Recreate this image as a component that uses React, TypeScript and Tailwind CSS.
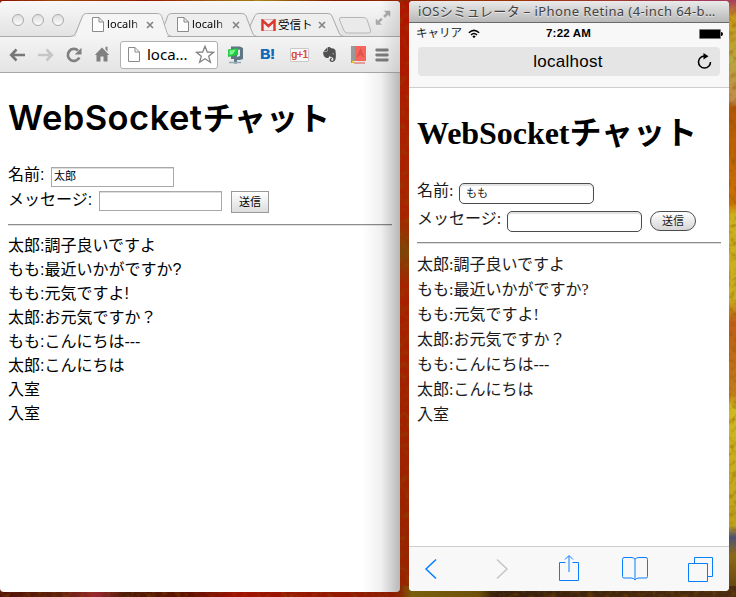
import React from 'react';
import { SiEvernote } from 'react-icons/si';

const sans = "font-['Liberation_Sans','Noto_Sans_CJK_JP',sans-serif]";
const serif = "font-['Liberation_Serif','Noto_Sans_CJK_JP',sans-serif]";
const ui = "font-['Noto_Sans','Noto_Sans_CJK_JP',sans-serif]";

function Wallpaper() {
  return (
    <svg className="absolute inset-0" width="736" height="597" viewBox="0 0 736 597" aria-hidden="true">
      <defs>
        <linearGradient id="wTop">
          <stop offset="0" stopColor="#8f0c00" />
          <stop offset=".08" stopColor="#a04a08" />
          <stop offset=".2" stopColor="#9a1400" />
          <stop offset=".35" stopColor="#a88a18" />
          <stop offset=".45" stopColor="#8a1a00" />
          <stop offset=".7" stopColor="#a03008" />
          <stop offset="1" stopColor="#a83a70" />
        </linearGradient>
        <linearGradient id="wMid" x1="0" y1="0" x2="0" y2="1">
          <stop offset="0" stopColor="#b01400" />
          <stop offset=".36" stopColor="#a82400" />
          <stop offset=".42" stopColor="#7e4408" />
          <stop offset=".48" stopColor="#a82000" />
          <stop offset="1" stopColor="#962400" />
        </linearGradient>
        <linearGradient id="wRight" x1="0" y1="0" x2="0" y2="1">
          <stop offset="0" stopColor="#a83c60" />
          <stop offset=".03" stopColor="#c79a18" />
          <stop offset=".1" stopColor="#b9a73c" />
          <stop offset=".17" stopColor="#c08a48" />
          <stop offset=".18" stopColor="#b35500" />
          <stop offset=".34" stopColor="#cd7004" />
          <stop offset=".36" stopColor="#cbb21c" />
          <stop offset=".5" stopColor="#c9ae20" />
          <stop offset=".54" stopColor="#c05c12" />
          <stop offset=".66" stopColor="#c27c18" />
          <stop offset=".68" stopColor="#cfba20" />
          <stop offset=".88" stopColor="#bda11c" />
          <stop offset=".9" stopColor="#4b5175" />
          <stop offset=".93" stopColor="#8a6b18" />
          <stop offset="1" stopColor="#5b3a10" />
        </linearGradient>
        <linearGradient id="wBottom">
          <stop offset="0" stopColor="#501008" />
          <stop offset=".08" stopColor="#5c200c" />
          <stop offset=".13" stopColor="#9a2430" />
          <stop offset=".17" stopColor="#4c1c08" />
          <stop offset=".26" stopColor="#611000" />
          <stop offset=".32" stopColor="#a01000" />
          <stop offset=".54" stopColor="#8c1c00" />
          <stop offset=".56" stopColor="#78600e" />
          <stop offset=".65" stopColor="#6c500c" />
          <stop offset=".67" stopColor="#38200c" />
          <stop offset="1" stopColor="#4c2c10" />
        </linearGradient>
        <filter id="paint" x="0" y="0" width="100%" height="100%">
          <feTurbulence type="fractalNoise" baseFrequency=".16" numOctaves="3" seed="4" />
          <feColorMatrix values="0 0 0 0 .25  0 0 0 0 .08  0 0 0 0 0  1.2 0 0 0 -.55" />
        </filter>
      </defs>
      <rect width="736" height="597" fill="url(#wTop)" />
      <rect x="396" y="2" width="18" height="595" fill="url(#wMid)" />
      <rect x="724" width="12" height="597" fill="url(#wRight)" />
      <rect y="586" width="736" height="11" fill="url(#wBottom)" />
      <rect width="736" height="597" filter="url(#paint)" />
    </svg>
  );
}

function TabShapes() {
  return (
    <svg className="absolute inset-0" width="400" height="36" viewBox="0 1 400 36" fill="none" stroke="#a9a9a9" aria-hidden="true">
      <path d="M250 26 L255 15.5 Q256 13.5 258.500 13.500 H328 Q331 13.500 332 16 L339 33 Q340.500 36.500 344 36.500 H250Z" fill="#eee" />
      <path d="M164 26 L168 15.500 Q169 13.500 171.500 13.500 H242 Q245 13.500 246 16 L252.500 33 Q254 36.500 257 36.500 H164Z" fill="#eee" />
      <path d="M0 36.500 H70 Q74 36.500 75.500 33.500 L82.500 16 Q83.500 13.500 86.500 13.500 H157 Q160.500 13.500 161.500 16 L167 33 Q168.500 36.500 172 36.500 H400" />
      <path d="M76 37.500 L76.500 33.500 L83.500 16 Q84.500 14 87 14 H157 Q160 14 161 16 L166.500 33 L167.500 37.500Z" fill="#f5f5f5" stroke="none" />
      <path d="M341 17.500 H363 Q366 17.500 367 19.500 L370.500 30 Q371.500 33 368.500 33 H347.500 Q345 33 344 30.500 L339.500 20 Q339 17.500 341 17.500Z" fill="#eaeaea" stroke="#b6b6b6" />
    </svg>
  );
}

function DocIcon() {
  return (
    <svg className="shrink-0" width="12" height="15" viewBox="0 0 12 15" fill="#fdfdfd" stroke="#8b8b8b" aria-hidden="true">
      <path d="M.5 .5 H7 L11.500 5 V14.500 H.5Z M7 .5 V5 H11.500" />
    </svg>
  );
}

function CloseIcon() {
  return (
    <svg className="shrink-0" width="8" height="8" viewBox="0 0 8 8" stroke="#828282" strokeWidth="1.600" aria-hidden="true">
      <path d="M1 1 L7 7 M7 1 L1 7" />
    </svg>
  );
}

function TrafficLight() {
  return <span className="h-3 w-3 rounded-full border border-[#aaa] bg-gradient-to-b from-[#dedede] to-[#fbfbfb]" />;
}

function TabTitle({ children }: { children: string }) {
  return <span className="ml-[3px] w-[34px] whitespace-nowrap bg-gradient-to-r from-black from-75% to-black/20 bg-clip-text text-[11px] tracking-[0.100px] text-transparent">{children}</span>;
}

function TabStrip() {
  return (
    <div className="relative h-[36px] bg-gradient-to-b from-[#f8f8f8] to-[#e2e2e2]">
      <TabShapes />
      <div className={`relative flex h-full items-center pt-[11px] pl-3 text-[11.500px] text-black ${ui}`}>
        <div className="-mt-[10px] flex w-[80px] gap-2">
          <TrafficLight />
          <TrafficLight />
          <TrafficLight />
        </div>
        <DocIcon />
        <TabTitle>localh</TabTitle>
        <span className="ml-[5px] flex w-[31px]"><CloseIcon /></span>
        <DocIcon />
        <TabTitle>localh</TabTitle>
        <span className="ml-[6px] flex w-[29px]"><CloseIcon /></span>
        <svg width="15" height="12" viewBox="0 0 15 12" aria-hidden="true">
          <path d="M1 .5 H14 V11.500 H1Z" fill="#f4eeee" stroke="#d9b6b2" />
          <path d="M1.500 12 V1.500 L7.500 7 L13.500 1.500 V12" fill="none" stroke="#d93a2f" strokeWidth="2.400" />
        </svg>
        <span className="ml-[2px] w-[36px] whitespace-nowrap">受信ト</span>
        <span className="ml-[4px] flex"><CloseIcon /></span>
      </div>
      <svg className="absolute top-[9px] left-[375px]" width="16" height="16" viewBox="0 0 16 16" fill="#aaa" stroke="#aaa" aria-hidden="true">
        <path d="M9.500 1 H15 V6.500 L13 4.600 L10 7.500 L8.500 6 L11.400 3Z M6.500 14.500 H1 V9 L3 10.900 L6 8 L7.500 9.500 L4.600 12.400Z" strokeWidth=".5" />
      </svg>
    </div>
  );
}

function Toolbar() {
  return (
    <div className="flex h-[36px] items-center border-b border-[#a6a6a6] bg-gradient-to-b from-[#f4f4f4] to-[#e4e4e4] pl-[9px]">
      <svg width="17" height="16" viewBox="0 0 17 16" fill="none" stroke="#777" strokeWidth="2.600" aria-hidden="true"><path d="M7.500 2.500 L2.200 8 L7.500 13.500 M2.500 8 H16" /></svg>
      <svg className="ml-[12px]" width="16" height="16" viewBox="0 0 16 16" fill="none" stroke="#c6c6c6" strokeWidth="2.600" aria-hidden="true"><path d="M8.500 2.500 L13.800 8 L8.500 13.500 M13.500 8 H0" /></svg>
      <svg className="ml-[12px]" width="16" height="16" viewBox="0 0 16 16" fill="none" aria-hidden="true">
        <path d="M13.300 10.500 A6 6 0 1 1 12 3.600" stroke="#808080" strokeWidth="2.700" /><path d="M15.500 .7 V7.500 H8.700Z" fill="#808080" />
      </svg>
      <svg className="ml-[12px]" width="16" height="17" viewBox="0 0 16 17" fill="#808080" aria-hidden="true"><path d="M8 1.500 L15.200 9 H13.500 V15.500 H9.500 V10.500 H6.500 V15.500 H2.500 V9 H.8Z M11.500 .8 H13.500 V5.500 L11.500 3.500Z" /></svg>
      <div className={`ml-[10px] flex h-[28px] w-[98px] items-center rounded-[3px] border border-[#b0b0b0] bg-white pl-[7px] text-[15px] text-black ${ui}`}>
        <DocIcon />
        <span className="ml-[7px] w-[42px]">loca...</span>
        <svg className="ml-[6px]" width="20" height="19" viewBox="0 0 20 19" fill="#fff" stroke="#858585" strokeWidth="1.300" aria-hidden="true"><path d="M10 1.200 L12.300 7 L18.500 7.300 L13.700 11.200 L15.400 17.300 L10 13.800 L4.600 17.300 L6.300 11.200 L1.500 7.300 L7.700 7Z" /></svg>
      </div>
      <svg className="ml-[9px]" width="18" height="20" viewBox="0 0 18 20" aria-hidden="true">
        <path d="M4 1.500 H13 L16 3 V14 L13 15 H10 V18.500 H7 V14 H4Z" fill="#5f7685" />
        <path d="M10 5 L13 4.500 V11 L10 12Z" fill="#dce8ec" />
        <path d="M1 4.500 L11 3 V10 L1 12Z" fill="#20c840" />
        <path d="M2.500 5.500 L9 4.500 L6 9 L2.500 10Z" fill="#7df590" />
        <path d="M2 17.500 H14" stroke="#91a8b5" strokeWidth="1.500" />
      </svg>
      <span className="ml-[15px] w-[16px] font-['Liberation_Sans',sans-serif] text-[14px] font-bold text-[#1269b8] [text-shadow:0.400px_0_#1269b8]">B!</span>
      <span className="ml-[14px] flex h-[14px] w-[19px] items-center justify-center rounded-[1px] border border-[#c9c9c9] bg-[#fbfbfb] font-['Liberation_Sans',sans-serif] text-[10.500px] leading-none tracking-[-0.400px] text-[#dc4835] [text-shadow:0.400px_0_#dc4835]">g+1</span>
      <SiEvernote className="ml-[13px] h-[15px] w-[15px] text-[#505050]" />
      <svg className="ml-[14px]" width="16" height="19" viewBox="0 0 16 19" aria-hidden="true">
        <path d="M0 1 H5 V18 H0Z" fill="#999" /><path d="M4 1 H15 V16 H4Z" fill="#f8655c" /><path d="M1 16 H14 V18 H1Z" fill="#eee3de" /><path d="M3 18 H14" stroke="#d65852" /><path d="M1 15 L4 18 H1Z" fill="#ecc41b" />
        <path d="M6.500 12 L9.500 5 L12.500 12 M8 9.500 H11" fill="none" stroke="#db504d" strokeWidth="1.500" />
      </svg>
      <svg className="ml-[8px]" width="14" height="14" viewBox="0 0 14 14" stroke="#7b7b7b" strokeWidth="2.800" strokeLinecap="round" aria-hidden="true"><path d="M1.700 2 H12.300 M1.700 7 H12.300 M1.700 12 H12.300" /></svg>
    </div>
  );
}

const chromeLog = ['太郎:調子良いですよ', 'もも:最近いかがですか?', 'もも:元気ですよ!', '太郎:お元気ですか？', 'もも:こんにちは---', '太郎:こんにちは', '入室', '入室'];
const phoneLog = chromeLog.slice(0, 7);

function ChromeWindow() {
  return (
    <section className="relative mt-px h-[591px] w-[400px] overflow-hidden rounded-[4px] bg-white">
      <TabStrip />
      <Toolbar />
      <main className={`px-2 text-[16px] leading-6 text-black ${sans}`}>
        <h1 className="mt-[18px] h-[50px] whitespace-nowrap text-[32px] leading-[50px] font-bold"><span className="font-['Inter',sans-serif] text-[34.500px] font-semibold tracking-[0.450px]">WebSocket</span><span className="font-['Noto_Sans_CJK_JP',sans-serif]">チャット</span></h1>
        <div className="mt-[22px] flex h-[24px] items-start whitespace-nowrap">
          <span className="w-[43px]">名前:</span>
          <span className="mt-[4px] h-[20px] w-[123px] border border-[#a9a9a9] bg-white pl-[2px] text-[11px] leading-[17px] shadow-[inset_0_1px_#ddd]">太郎</span>
        </div>
        <div className="mt-[1px] flex h-[25px] items-start whitespace-nowrap">
          <span className="w-[91px]">メッセージ:</span>
          <span className="mt-[3px] h-[20px] w-[123px] border border-[#a9a9a9] bg-white shadow-[inset_0_1px_#ddd]" />
          <span className="mt-[3px] ml-[9px] flex h-[22px] w-[38px] items-center justify-center border border-[#999] bg-gradient-to-b from-white to-[#ddd] pb-px text-[11px]">送信</span>
        </div>
        <div className="mt-[11px] h-[2px] border-t border-b border-t-[#8c8c8c] border-b-[#e3e3e3]" />
        <div className="mt-[8px]">
          {chromeLog.map((line, i) => <p key={i} className="h-6 whitespace-nowrap">{line}</p>)}
        </div>
      </main>
      <div className="absolute top-0 right-0 h-[72px] w-[20px] bg-gradient-to-r from-transparent to-black/10" />
      <div className="absolute top-[72px] right-0 bottom-0 w-[38px] bg-gradient-to-r from-transparent via-black/6 to-black/28" />
    </section>
  );
}

function SafariToolbar() {
  return (
    <footer className="flex h-[45px] items-center border-t border-[#cfcfcf] bg-[#f8f8f8] pl-[15px] text-[#087eff]">
      <svg width="14" height="22" viewBox="0 0 14 22" fill="none" stroke="currentColor" strokeWidth="1.500" aria-hidden="true"><path d="M12 1.500 L2 11 L12 20.500" /></svg>
      <svg className="ml-[57px]" width="14" height="22" viewBox="0 0 14 22" fill="none" stroke="#c5c5c8" strokeWidth="1.500" aria-hidden="true"><path d="M2 1.500 L12 11 L2 20.500" /></svg>
      <svg className="-mt-[3px] ml-[50px]" width="20" height="28" viewBox="0 0 20 28" fill="none" stroke="currentColor" aria-hidden="true"><path d="M6.500 8.500 H.5 V26.500 H19.500 V8.500 H13.500 M10 18 V2 M6 5.500 L10 1.500 L14 5.500" /></svg>
      <svg className="ml-[42px]" width="28" height="26" viewBox="0 0 28 26" fill="none" stroke="currentColor" aria-hidden="true"><path d="M14 3 Q12.500 1.500 10 1.500 H3 Q1.500 1.500 1.500 3.500 V20.500 Q1.500 22 3 22 H10 Q13 22 14 24 Q15 22 18 22 H25 Q26.500 22 26.500 20.500 V3.500 Q26.500 1.500 25 1.500 H18 Q15.500 1.500 14 3 V24" /></svg>
      <svg className="-mt-[1px] ml-[39px]" width="26" height="26" viewBox="0 0 26 26" fill="none" stroke="currentColor" aria-hidden="true"><path d="M.5 7.500 H19.500 V25.500 H.5Z M6.500 7 V1.500 H24.500 V20.500 H20" /></svg>
    </footer>
  );
}

function SimulatorWindow() {
  return (
    <section className="mt-px ml-[9px] flex h-[590px] w-[320px] flex-col overflow-hidden rounded-[4px] bg-white text-black">
      <header className={`flex h-[22px] items-center border-b border-[#696969] bg-gradient-to-b from-[#eaeaea] to-[#b8b8b8] pt-px pl-[9px] text-[13px] tracking-[0.410px] whitespace-nowrap text-[#424242] [text-shadow:0_1px_#e8e8e8] ${ui}`}>iOSシミュレータ – iPhone Retina (4-inch 64-b…</header>
      <div className="h-[65px] border-b border-[#cdcdcd] bg-[#f8f8f8]">
        <div className={`flex h-[20px] items-center pt-px pl-[7px] text-[11.500px] ${sans}`}>
          <span className="w-[52px] text-[#222]">キャリア</span>
          <svg width="12" height="10" viewBox="0 0 14 11" fill="none" stroke="#000" strokeWidth="1.800" aria-hidden="true"><path d="M1 4 Q7 -1.500 13 4 M3.500 6.500 Q7 3.300 10.500 6.500" /><path d="M5 8 Q7 6.300 9 8 L7 10.500Z" fill="#000" stroke="none" /></svg>
          <span className="ml-[66px] w-[60px] text-[11.500px] font-bold tracking-[0.200px]">7:22 AM</span>
          <span className="ml-[93px] h-[10px] w-[22px] rounded-[1px] border border-[#777] bg-black" />
          <span className="h-[4px] w-[2px] rounded-r bg-black" />
        </div>
        <div className={`relative mt-[4px] ml-[9px] flex h-[29px] w-[302px] items-center justify-center rounded-[4px] bg-[#e5e5e6] pr-[2px] text-[17px] tracking-[0.250px] ${sans}`}>
          localhost
          <svg className="absolute top-[6px] right-[7px]" width="17" height="17" viewBox="0 0 17 17" fill="none" stroke="#000" strokeWidth="1.600" aria-hidden="true"><path d="M8.500 3 A6 6 0 1 0 14.500 9" /><path d="M7.500 0 L12.500 3.200 L7.500 6.500Z" fill="#000" stroke="none" /></svg>
        </div>
      </div>
      <main className={`flex-1 pr-2 pl-2 text-[16px] leading-[25px] ${serif}`}>
        <h1 className="mt-[20px] h-[50px] whitespace-nowrap text-[32px] leading-[50px] font-bold tracking-[-0.050px]">WebSocketチャット</h1>
        <div className="mt-[20px] flex h-[28px] items-start whitespace-nowrap text-[#1a1a1a]">
          <span className="w-[42px]">名前:</span>
          <span className="mt-[5px] h-[21px] w-[135px] rounded-[5px] border border-[#4c4c4c] bg-white pl-[6px] text-[11px] leading-[18px] shadow-[inset_0_2px_1px_#e2e2e2]">もも</span>
        </div>
        <div className="flex h-[28px] items-start whitespace-nowrap text-[#1a1a1a]">
          <span className="w-[90px]">メッセージ:</span>
          <span className="mt-[5px] h-[21px] w-[135px] rounded-[5px] border border-[#4c4c4c] bg-white shadow-[inset_0_2px_1px_#e2e2e2]" />
          <span className="mt-[5px] ml-[8px] flex h-[20px] w-[46px] items-center justify-center rounded-full border border-[#4c4c4c] bg-gradient-to-b from-white to-[#d6d6d6] text-[11px] leading-none">送信</span>
        </div>
        <div className="mt-[8px] h-[2px] border-t border-b border-t-[#8d8d8d] border-b-[#ddd]" />
        <div className="mt-[8px] text-[#1a1a1a]">
          {phoneLog.map((line, i) => <p key={i} className="h-[25px] whitespace-nowrap">{line}</p>)}
        </div>
      </main>
      <SafariToolbar />
    </section>
  );
}

export default function App() {
  return (
    <div className="relative h-[597px] w-[736px] overflow-hidden">
      <Wallpaper />
      <div className="relative flex items-start">
        <ChromeWindow />
        <SimulatorWindow />
      </div>
    </div>
  );
}
